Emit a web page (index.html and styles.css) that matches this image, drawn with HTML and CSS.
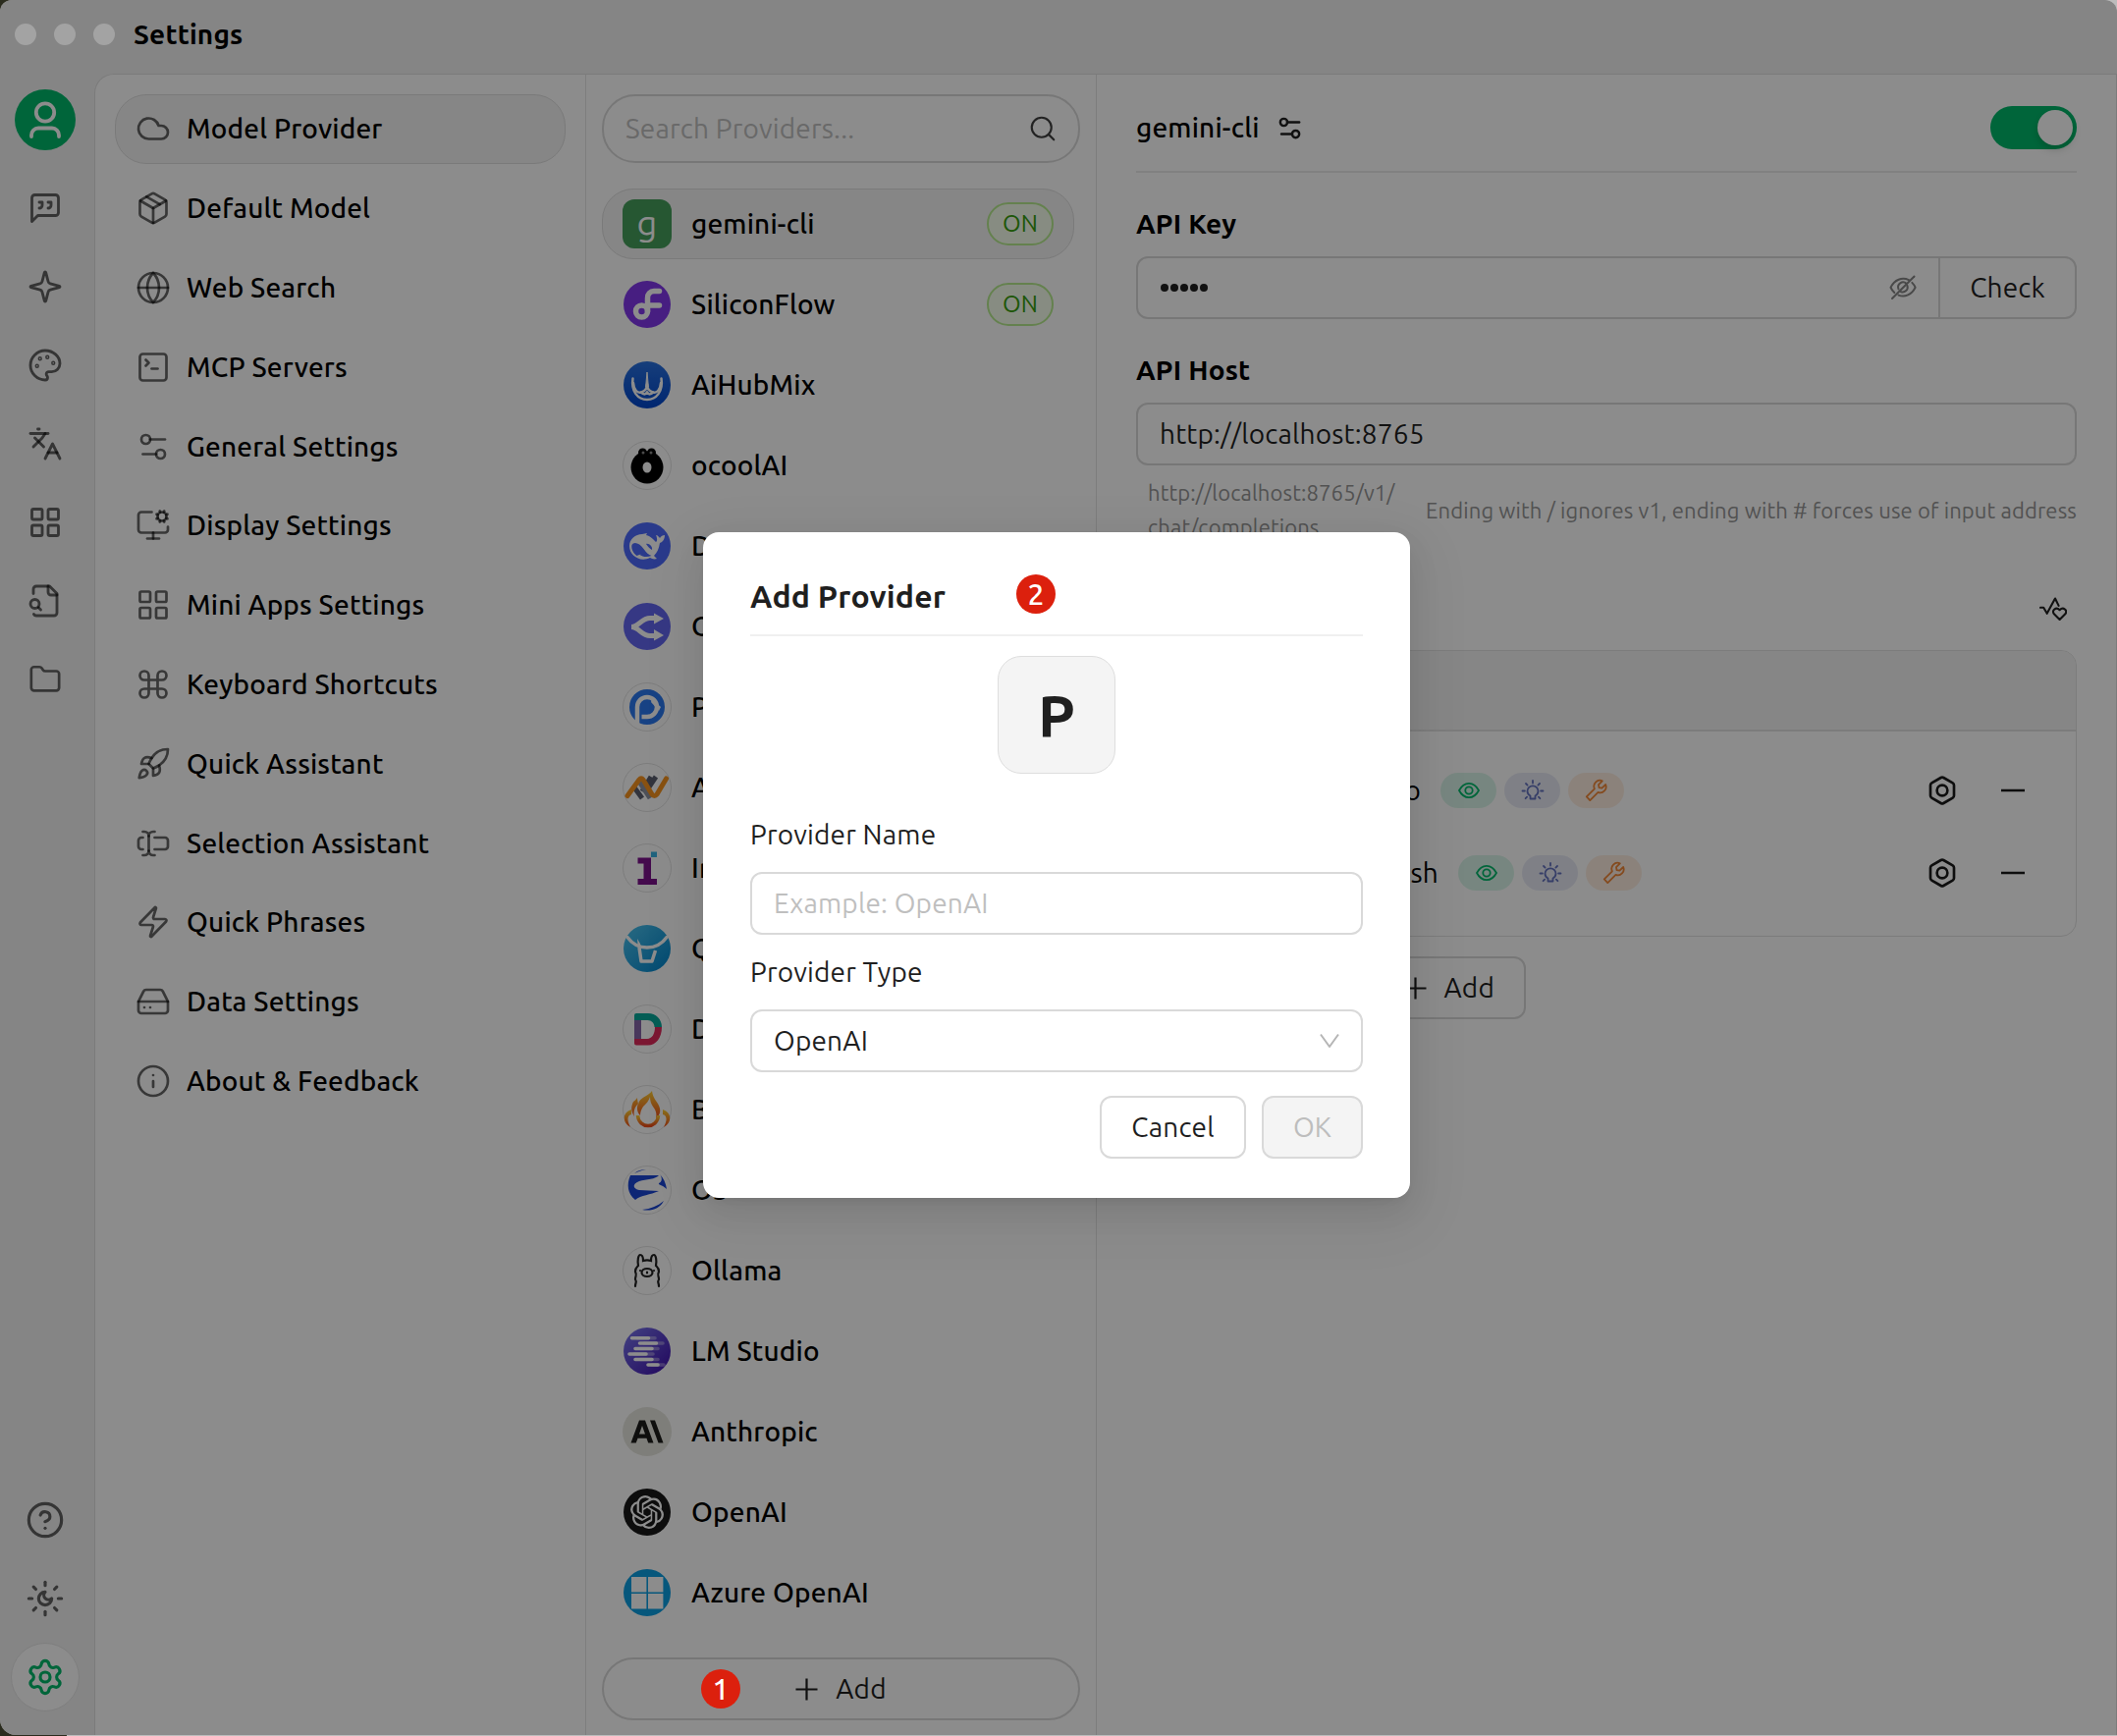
FILE: index.html
```
<!DOCTYPE html>
<html lang="en">
<head>
<meta charset="utf-8">
<title>Settings</title>
<link rel="stylesheet" href="styles.css">
</head>
<body>
<svg class="sprite" aria-hidden="true">
  <symbol id="i-cloud" viewBox="0 0 24 24"><path d="M17.5 19H9a7 7 0 1 1 6.71-9h1.79a4.5 4.5 0 1 1 0 9Z"/></symbol>
  <symbol id="i-package" viewBox="0 0 24 24"><path d="M11 21.73a2 2 0 0 0 2 0l7-4A2 2 0 0 0 21 16V8a2 2 0 0 0-1-1.73l-7-4a2 2 0 0 0-2 0l-7 4A2 2 0 0 0 3 8v8a2 2 0 0 0 1 1.73z"/><path d="M12 22V12"/><path d="M3.29 7 12 12l8.71-5"/><path d="m7.5 4.27 9 5.15"/></symbol>
  <symbol id="i-globe" viewBox="0 0 24 24"><circle cx="12" cy="12" r="10"/><path d="M12 2a14.5 14.5 0 0 0 0 20 14.5 14.5 0 0 0 0-20"/><path d="M2 12h20"/></symbol>
  <symbol id="i-terminal" viewBox="0 0 24 24"><path d="m7 11 2-2-2-2"/><path d="M11 13h4"/><rect width="18" height="18" x="3" y="3" rx="2"/></symbol>
  <symbol id="i-sliders" viewBox="0 0 24 24"><path d="M20 7h-10"/><path d="M14 17H5"/><circle cx="17" cy="17" r="3"/><circle cx="7" cy="7" r="3"/></symbol>
  <symbol id="i-monitor" viewBox="0 0 24 24"><path d="M12 17v4"/><path d="m14.305 7.53.923-.382"/><path d="m15.228 4.852-.923-.383"/><path d="m16.852 3.228-.383-.924"/><path d="m16.852 8.772-.383.923"/><path d="m19.148 3.228.383-.924"/><path d="m19.53 9.696-.382-.924"/><path d="m20.772 4.852.924-.383"/><path d="m20.772 7.148.924.383"/><path d="M22 13v2a2 2 0 0 1-2 2H4a2 2 0 0 1-2-2V5a2 2 0 0 1 2-2h7"/><path d="M8 21h8"/><circle cx="18" cy="6" r="3"/></symbol>
  <symbol id="i-grid" viewBox="0 0 24 24"><rect width="7" height="7" x="3" y="3" rx="1"/><rect width="7" height="7" x="14" y="3" rx="1"/><rect width="7" height="7" x="14" y="14" rx="1"/><rect width="7" height="7" x="3" y="14" rx="1"/></symbol>
  <symbol id="i-command" viewBox="0 0 24 24"><path d="M15 6v12a3 3 0 1 0 3-3H6a3 3 0 1 0 3 3V6a3 3 0 1 0-3 3h12a3 3 0 1 0-3-3"/></symbol>
  <symbol id="i-rocket" viewBox="0 0 24 24"><path d="M4.5 16.5c-1.5 1.26-2 5-2 5s3.74-.5 5-2c.71-.84.7-2.13-.09-2.91a2.18 2.18 0 0 0-2.91-.09z"/><path d="m12 15-3-3a22 22 0 0 1 2-3.95A12.88 12.88 0 0 1 22 2c0 2.72-.78 7.5-6 11a22.35 22.35 0 0 1-4 2z"/><path d="M9 12H4s.55-3.03 2-4c1.62-1.08 5 0 5 0"/><path d="M12 15v5s3.03-.55 4-2c1.08-1.62 0-5 0-5"/></symbol>
  <symbol id="i-cursor" viewBox="0 0 24 24"><path d="M5 4h1a3 3 0 0 1 3 3 3 3 0 0 1 3-3h1"/><path d="M13 20h-1a3 3 0 0 1-3-3 3 3 0 0 1-3 3H5"/><path d="M5 16H4a2 2 0 0 1-2-2v-4a2 2 0 0 1 2-2h1"/><path d="M13 8h7a2 2 0 0 1 2 2v4a2 2 0 0 1-2 2h-7"/><path d="M9 7v10"/></symbol>
  <symbol id="i-zap" viewBox="0 0 24 24"><path d="M4 14a1 1 0 0 1-.78-1.63l9.9-10.2a.5.5 0 0 1 .86.46l-1.92 6.02A1 1 0 0 0 13 10h7a1 1 0 0 1 .78 1.63l-9.9 10.2a.5.5 0 0 1-.86-.46l1.92-6.02A1 1 0 0 0 11 14z"/></symbol>
  <symbol id="i-drive" viewBox="0 0 24 24"><path d="M22 12H2"/><path d="M5.45 5.11 2 12v6a2 2 0 0 0 2 2h16a2 2 0 0 0 2-2v-6l-3.45-6.89A2 2 0 0 0 16.76 4H7.24a2 2 0 0 0-1.79 1.11z"/><path d="M6 16h.01"/><path d="M10 16h.01"/></symbol>
  <symbol id="i-info" viewBox="0 0 24 24"><circle cx="12" cy="12" r="10"/><path d="M12 16v-4"/><path d="M12 8h.01"/></symbol>
  <symbol id="i-quote" viewBox="0 0 24 24"><path d="M21 15a2 2 0 0 1-2 2H7l-4 4V5a2 2 0 0 1 2-2h14a2 2 0 0 1 2 2z"/><path d="M8 12a2 2 0 0 0 2-2V8H8"/><path d="M14 12a2 2 0 0 0 2-2V8h-2"/></symbol>
  <symbol id="i-sparkle" viewBox="0 0 24 24"><path d="M9.937 15.5A2 2 0 0 0 8.5 14.063l-6.135-1.582a.5.5 0 0 1 0-.962L8.5 9.936A2 2 0 0 0 9.937 8.5l1.582-6.135a.5.5 0 0 1 .963 0L14.063 8.5A2 2 0 0 0 15.5 9.937l6.135 1.581a.5.5 0 0 1 0 .964L15.5 14.063a2 2 0 0 0-1.437 1.437l-1.582 6.135a.5.5 0 0 1-.963 0z"/></symbol>
  <symbol id="i-palette" viewBox="0 0 24 24"><circle cx="13.5" cy="6.5" r=".5"/><circle cx="17.5" cy="10.5" r=".5"/><circle cx="8.5" cy="7.5" r=".5"/><circle cx="6.5" cy="12.5" r=".5"/><path d="M12 2C6.5 2 2 6.5 2 12s4.500 10 10 10c.926 0 1.648-.746 1.648-1.688 0-.437-.18-.835-.437-1.125-.29-.289-.438-.652-.438-1.125a1.640 1.640 0 0 1 1.668-1.668h1.996c3.051 0 5.555-2.503 5.555-5.554C21.965 6.012 17.461 2 12 2z"/></symbol>
  <symbol id="i-lang" viewBox="0 0 24 24"><path d="m5 8 6 6"/><path d="m4 14 6-6 2-3"/><path d="M2 5h12"/><path d="M7 2h1"/><path d="m22 22-5-10-5 10"/><path d="M14 18h6"/></symbol>
  <symbol id="i-file" viewBox="0 0 24 24"><path d="M14 2v4a2 2 0 0 0 2 2h4"/><path d="M4.268 21a2 2 0 0 0 1.727 1H18a2 2 0 0 0 2-2V7l-5-5H6a2 2 0 0 0-2 2v3"/><path d="m9 18-1.500-1.500"/><circle cx="5" cy="14" r="3"/></symbol>
  <symbol id="i-folder" viewBox="0 0 24 24"><path d="M20 20a2 2 0 0 0 2-2V8a2 2 0 0 0-2-2h-7.900a2 2 0 0 1-1.690-.9L9.600 3.900A2 2 0 0 0 7.930 3H4a2 2 0 0 0-2 2v13a2 2 0 0 0 2 2Z"/></symbol>
  <symbol id="i-help" viewBox="0 0 24 24"><circle cx="12" cy="12" r="10"/><path d="M9.090 9a3 3 0 0 1 5.830 1c0 2-3 3-3 3"/><path d="M12 17h.01"/></symbol>
  <symbol id="i-sunmoon" viewBox="0 0 24 24"><path d="M12 8a2.830 2.830 0 0 0 4 4 4 4 0 1 1-4-4"/><path d="M12 2v2"/><path d="M12 20v2"/><path d="m4.900 4.900 1.400 1.400"/><path d="m17.700 17.700 1.400 1.400"/><path d="M2 12h2"/><path d="M20 12h2"/><path d="m6.300 17.700-1.400 1.400"/><path d="m19.100 4.900-1.400 1.400"/></symbol>
  <symbol id="i-gear" viewBox="0 0 24 24"><path d="M9.671 4.136a2.340 2.340 0 0 1 4.659 0 2.340 2.340 0 0 0 3.319 1.915 2.340 2.340 0 0 1 2.330 4.033 2.340 2.340 0 0 0 0 3.831 2.340 2.340 0 0 1-2.330 4.033 2.340 2.340 0 0 0-3.319 1.915 2.340 2.340 0 0 1-4.659 0 2.340 2.340 0 0 0-3.320-1.915 2.340 2.340 0 0 1-2.330-4.033 2.340 2.340 0 0 0 0-3.831A2.340 2.340 0 0 1 6.350 6.051a2.340 2.340 0 0 0 3.319-1.915"/><circle cx="12" cy="12" r="3"/></symbol>
  <symbol id="i-search" viewBox="0 0 24 24"><circle cx="11" cy="11" r="8"/><path d="m21 21-4.300-4.300"/></symbol>
  <symbol id="i-bolt" viewBox="0 0 24 24"><path d="M21 16V8a2 2 0 0 0-1-1.730l-7-4a2 2 0 0 0-2 0l-7 4A2 2 0 0 0 3 8v8a2 2 0 0 0 1 1.730l7 4a2 2 0 0 0 2 0l7-4A2 2 0 0 0 21 16z"/><circle cx="12" cy="12" r="4"/></symbol>
  <symbol id="i-minus" viewBox="0 0 24 24"><path d="M0 12h24"/></symbol>
  <symbol id="i-plus" viewBox="0 0 24 24"><path d="M.5 12h23M12 .5v23"/></symbol>
  <symbol id="i-eye" viewBox="0 0 24 24"><path d="M2 12C7 2.500 17 2.500 22 12C17 21.500 7 21.500 2 12Z"/><circle cx="12" cy="12" r="3.700"/></symbol>
  <symbol id="i-bulb" viewBox="0 0 24 24"><path d="M9.500 17.500v3h5v-3c2-1 3-2.800 3-4.700a5.500 5.500 0 0 0-11 0c0 1.900 1 3.700 3 4.700Z"/><path d="M12 2v2.500M5 5l1.600 1.600M19 5l-1.600 1.600M1.500 12.500h2.400M22.500 12.500h-2.400M4.600 20.200l1.500-1.500M19.400 20.200l-1.500-1.500"/></symbol>
  <symbol id="i-wrench" viewBox="0 0 24 24"><path d="M17.800 2.300a6 6 0 0 0-7.900 8L1.800 18.300l3.500 3.800 8.200-8.200a6 6 0 0 0 7.700-7.900l-3.800 3.700-2.900-.6-.5-2.900z"/></symbol>
  <symbol id="i-eyeoff" viewBox="0 0 28 26"><path d="M20 5.200C13 1.800 5.400 5 1.500 12.700C2.500 14.800 3.800 16.600 5.300 18M9.500 20.600C16 23.200 22.900 20 26.600 12.700C25.700 10.800 24.600 9.200 23.300 7.900"/><path d="M17.500 8.800a5 5 0 0 0-8 5.600M11.800 17.100a5 5 0 0 0 6.600-6.300"/><path d="M25.500 1.500 3 24"/></symbol>
  <symbol id="i-health" viewBox="0 0 28 24"><path d="M1 10.800h3.200l3.500 6L16 1.500l3.600 7.400"/><path d="M20.600 23 14.900 17.300c-3-3.600 2-7.700 5.700-4.100 3.700-3.600 8.700.5 5.700 4.100z"/></symbol>
  <symbol id="i-down" viewBox="0 0 20 16"><path d="M1 1.500 10 14 19 1.500"/></symbol>
  <linearGradient id="g-aihub" x1="0" y1="0" x2="0" y2="1"><stop offset="0" stop-color="#2a72e0"/><stop offset="1" stop-color="#0046cc"/></linearGradient>
  <linearGradient id="g-qiniu" x1="0" y1="0" x2="1" y2="1"><stop offset="0" stop-color="#4cc3ee"/><stop offset="1" stop-color="#0084cc"/></linearGradient>
  <linearGradient id="g-flame" x1="0" y1="0" x2="0" y2="1"><stop offset="0" stop-color="#ffd034"/><stop offset="1" stop-color="#f04f1a"/></linearGradient>
  <linearGradient id="g-lm" x1="0" y1="0" x2="1" y2="1"><stop offset="0" stop-color="#7a7aee"/><stop offset="1" stop-color="#3d0cab"/></linearGradient>
</svg>

<div class="window">
  <header class="titlebar">
    <div class="lights"><i></i><i></i><i></i></div>
    <h1 class="window-title">Settings</h1>
  </header>

  <div class="body">
    <aside class="rail">
      <div class="rail-group">
        <div class="me"><svg viewBox="0 0 62 62"><circle cx="31" cy="23.500" r="9.200"/><path d="M17 48v-1.500a7 7 0 0 1 7-7h14a7 7 0 0 1 7 7V48"/></svg></div>
        <div class="rail-item"><svg class="icon"><use href="#i-quote"/></svg></div>
        <div class="rail-item"><svg class="icon"><use href="#i-sparkle"/></svg></div>
        <div class="rail-item"><svg class="icon"><use href="#i-palette"/></svg></div>
        <div class="rail-item"><svg class="icon"><use href="#i-lang"/></svg></div>
        <div class="rail-item"><svg class="icon"><use href="#i-grid"/></svg></div>
        <div class="rail-item"><svg class="icon"><use href="#i-file"/></svg></div>
        <div class="rail-item"><svg class="icon folder"><use href="#i-folder"/></svg></div>
      </div>
      <div class="rail-group rail-bottom">
        <div class="rail-item"><svg class="icon big"><use href="#i-help"/></svg></div>
        <div class="rail-item"><svg class="icon big"><use href="#i-sunmoon"/></svg></div>
        <div class="rail-item current"><svg class="icon big"><use href="#i-gear"/></svg></div>
      </div>
    </aside>

    <div class="content">
      <nav class="menu">
        <a class="menu-item selected"><svg class="icon"><use href="#i-cloud"/></svg><span>Model Provider</span></a>
        <a class="menu-item"><svg class="icon"><use href="#i-package"/></svg><span>Default Model</span></a>
        <a class="menu-item"><svg class="icon"><use href="#i-globe"/></svg><span>Web Search</span></a>
        <a class="menu-item"><svg class="icon"><use href="#i-terminal"/></svg><span>MCP Servers</span></a>
        <a class="menu-item"><svg class="icon"><use href="#i-sliders"/></svg><span>General Settings</span></a>
        <a class="menu-item"><svg class="icon"><use href="#i-monitor"/></svg><span>Display Settings</span></a>
        <a class="menu-item"><svg class="icon"><use href="#i-grid"/></svg><span>Mini Apps Settings</span></a>
        <a class="menu-item"><svg class="icon"><use href="#i-command"/></svg><span>Keyboard Shortcuts</span></a>
        <a class="menu-item"><svg class="icon"><use href="#i-rocket"/></svg><span>Quick Assistant</span></a>
        <a class="menu-item"><svg class="icon"><use href="#i-cursor"/></svg><span>Selection Assistant</span></a>
        <a class="menu-item"><svg class="icon"><use href="#i-zap"/></svg><span>Quick Phrases</span></a>
        <a class="menu-item"><svg class="icon"><use href="#i-drive"/></svg><span>Data Settings</span></a>
        <a class="menu-item"><svg class="icon"><use href="#i-info"/></svg><span>About &amp; Feedback</span></a>
      </nav>

      <section class="providers">
        <div class="search"><span>Search Providers...</span><svg class="icon"><use href="#i-search"/></svg></div>
        <div class="provider-list">
          <div class="provider selected"><div class="logo letter">g</div><span class="name">gemini-cli</span><span class="tag">ON</span></div>
          <div class="provider">
            <svg class="logo" viewBox="0 0 50 50"><circle cx="25" cy="25" r="24" fill="#8138ec"/><g fill="none" stroke="#fff" stroke-width="5.500" stroke-linecap="round"><circle cx="19.500" cy="32" r="6"/><path d="M25.500 32V18.500a6.500 6.500 0 0 1 6.500-7h5.500M26 26h11.500"/></g></svg>
            <span class="name">SiliconFlow</span><span class="tag">ON</span></div>
          <div class="provider">
            <svg class="logo" viewBox="0 0 50 50"><circle cx="25" cy="25" r="24" fill="url(#g-aihub)"/><g fill="none" stroke="#fff" stroke-width="2.500" stroke-linecap="round"><path d="M10.500 18.500c-2 13 5 21.500 14.500 21.500s16.500-8.500 14.500-21.500"/><path d="M11 23c.500 7 4 10.500 8 9.500 4-1 6-4 6-8.500 0 4.500 2 7.500 6 8.500 4 1 7.500-2.500 8-9.500"/><path d="M19 32.500c2 2 4 3 6 0 2 3 4 2 6 0"/></g><path d="M25 12 23.600 27h2.800Z" fill="#fff" stroke="#fff"/></svg>
            <span class="name">AiHubMix</span></div>
          <div class="provider">
            <svg class="logo" viewBox="0 0 50 50"><circle class="rim" cx="25" cy="25" r="24.500"/><circle cx="25" cy="27" r="16.500"/><circle cx="20.500" cy="12" r="4.500"/><circle cx="29.500" cy="12" r="4.500"/><ellipse cx="25" cy="27" rx="4.500" ry="5.500" fill="#fff"/><circle cx="21" cy="12" r="1.500" fill="#888"/><circle cx="29" cy="12" r="1.500" fill="#888"/></svg>
            <span class="name">ocoolAI</span></div>
          <div class="provider">
            <svg class="logo" viewBox="0 0 50 50"><circle cx="25" cy="25" r="24" fill="#4d6bfe"/><path fill="#fff" d="M7 25c0-7 6-12 13-12l5-1-1 2c5 1 8 5 10 7 2-1 1-5 0-7 2 0 3 2 4 3 1-2 3-3 5-3 0 4-2 7-5 8-1 6-3 10-6 13l3 3c-3 1-5 0-7-1-10 5-21-2-21-12Z"/><path fill="#4d6bfe" d="M9.500 24c2-4 8-2 12 4 3 4 5 6 8 7-5 2-9 1-12-1l2-1-5 2c-3-2-6-7-5-11ZM24 23c3-1 7 3 6 6-2-1-4-3-6-6Z"/></svg>
            <span class="name">DeepSeek</span></div>
          <div class="provider">
            <svg class="logo" viewBox="0 0 50 50"><circle cx="25" cy="25" r="24" fill="#6366f1"/><g fill="none" stroke="#fff" stroke-width="5"><path d="M9 25.500c8 0 10-9 19-9h6M9 25.500c8 0 10 9 19 9h6"/></g><path fill="#fff" d="M32 11.500 42 17l-10 5.500ZM32 28l10 6-10 5.500Z"/></svg>
            <span class="name">OpenRouter</span></div>
          <div class="provider">
            <svg class="logo" viewBox="0 0 50 50"><circle class="rim" cx="25" cy="25" r="24.500"/><circle cx="25" cy="25" r="18" fill="#2a78f0"/><path fill="none" stroke="#fff" stroke-width="4.500" d="M15 42V25a10 10 0 1 1 10 10h-5.500"/><path fill="#fff" d="M30 17l9 8-2 4-8-9Z"/></svg>
            <span class="name">PPIO</span></div>
          <div class="provider">
            <svg class="logo" viewBox="0 0 50 50"><circle class="rim" cx="25" cy="25" r="24.500"/><g fill="none" stroke-width="5"><path stroke="#5b6070" d="m12 25 8 11M29 14l-9 15M34 14l-8 12"/><path stroke="#8d93a0" d="m17 19 11 17"/><path stroke="#f79420" stroke-linecap="round" stroke-linejoin="round" d="M5 33.500 17 17q2-2.500 4 0l9 15q2.500 3 5 0L44.500 16"/></g></svg>
            <span class="name">AlayaNew</span></div>
          <div class="provider">
            <svg class="logo" viewBox="0 0 50 50"><circle class="rim" cx="25" cy="25" r="24.500"/><path fill="#7c138c" d="M15.500 14.500H29V36h6v6H15.500v-6h6V20.500h-6Z"/><path fill="#3bb4e6" d="M29 8.500h6v5.500h-6Z"/></svg>
            <span class="name">Infini</span></div>
          <div class="provider">
            <svg class="logo" viewBox="0 0 50 50"><circle cx="25" cy="25" r="24" fill="url(#g-qiniu)"/><path fill="none" stroke="#fff" stroke-width="3.400" stroke-linecap="round" d="M5 13.500c5 7 12 10.500 20 10.500s15-3.500 20-10.500"/><path fill="#fff" d="M15 15l3 5 1 6h-3Z"/><path fill="none" stroke="#fff" stroke-width="3.500" stroke-linejoin="round" d="m17 24 2 14h11l3.500-11"/></svg>
            <span class="name">Qiniu</span></div>
          <div class="provider">
            <svg class="logo" viewBox="0 0 50 50"><circle class="rim" cx="25" cy="25" r="24.500"/><path fill="#8565a8" d="M12 14h7v22l-7 3Z"/><path fill="#06a99c" d="M12 11a2 2 0 0 1 2-2h12c8 0 14 6 14 14h-7.500c0-4-3-7-7-7H12Z"/><path fill="#e02b5c" d="M40 23c0 11-6 18.500-14 18.500H14a2 2 0 0 1-2-2V35h13c5 0 8-5 8-12Z"/></svg>
            <span class="name">DMX</span></div>
          <div class="provider">
            <svg class="logo" viewBox="0 0 50 50"><circle class="rim" cx="25" cy="25" r="24.500"/><path fill="url(#g-flame)" d="M30 6c1 8 5 10 7 15 3 6 0 11-3 13 1-5 0-8-3-12-2-3-3-6-3-10-1 4-4 7-7 10-2 3-3 6-3 9-3-3-4-8-2-12-4 4-5 8-4 13-4-6-3-11-1-15 2-1 3-3 4-4 0 3 1 5 1 7C17 12 26 12 30 6Z"/><path fill="none" stroke="url(#g-flame)" stroke-width="3.500" d="M15.500 31c1 14 20 14 21 0"/><path fill="url(#g-flame)" d="M9 25c-9 3-10 13-1 18-4-8-3-12 1-13ZM41 25c9 3 10 13 1 18 4-8 3-12-1-13Z"/></svg>
            <span class="name">BurnCloud</span></div>
          <div class="provider">
            <svg class="logo" viewBox="0 0 50 50"><circle class="rim" cx="25" cy="25" r="24.500"/><path fill="#1a45d6" d="M8 10h29c-3 4-13 4-20 6-8 3-6 8 0 9l20 1c-9 4-18 4-24 9-8-6-9-16-5-25ZM38 9c4 4 6 9 7 15-5-5-9-4-8-6 3-1 4-5 1-9ZM20 45c9-1 16-4 22-9-4 8-13 11-22 9ZM12 8c4-3 7-4 12-4-5 1-8 2-12 4Z"/></svg>
            <span class="name">O3</span></div>
          <div class="provider">
            <svg class="logo" viewBox="0 0 50 50"><circle class="rim" cx="25" cy="25" r="24.500"/><g fill="none" stroke="#222" stroke-width="2.200" stroke-linecap="round"><path d="M13 41c0-4 2-4 0-7 0-4 2-4 0-8 0-4 2-5 3-6-1-5 0-11 2-11s3 3 3 6c3-1 5-1 8 0 0-3 1-6 3-6s3 6 2 11c1 1 3 2 3 6-2 4 0 4 0 8-2 3 0 3 0 7"/><ellipse cx="25" cy="27" rx="5.500" ry="4"/><path d="M25 26.500v1M18 25h.010M32 25h.010"/></g></svg>
            <span class="name">Ollama</span></div>
          <div class="provider">
            <svg class="logo" viewBox="0 0 50 50"><circle cx="25" cy="25" r="24" fill="url(#g-lm)"/><g stroke="#fff" stroke-width="3.600" stroke-linecap="round"><path stroke-opacity=".35" d="M15 11.700h18M22 17h19M18 22.500h18M12 28h19M18 33.500h18M30 39h12"/><path d="M9.500 11.700h17M17.500 17h17M13 22.500h17M7 28h17M13 33.500h17M26 39h10"/></g></svg>
            <span class="name">LM Studio</span></div>
          <div class="provider">
            <svg class="logo" viewBox="0 0 50 50"><circle class="cream" cx="25" cy="25" r="25"/><path fill="#1c1c1a" fill-rule="evenodd" d="M17 13.500h6l8.500 23h-5.300l-1.700-4.700h-9l-1.700 4.700H8.500Zm3 5.500-3 8.400h6ZM28 13.500h5l8.500 23h-5Z"/></svg>
            <span class="name">Anthropic</span></div>
          <div class="provider">
            <svg class="logo" viewBox="0 0 50 50"><circle cx="25" cy="25" r="24" fill="#181818"/><path fill="#fff" transform="translate(8 8) scale(1.417)" d="M22.2819 9.8211a5.9847 5.9847 0 0 0-.5157-4.9108 6.0462 6.0462 0 0 0-6.5098-2.9A6.0651 6.0651 0 0 0 4.9807 4.1818a5.9847 5.9847 0 0 0-3.9977 2.9 6.0462 6.0462 0 0 0 .7427 7.0966 5.98 5.98 0 0 0 .511 4.9107 6.051 6.051 0 0 0 6.5146 2.9001A5.9847 5.9847 0 0 0 13.2599 24a6.0557 6.0557 0 0 0 5.7718-4.2058 5.9894 5.9894 0 0 0 3.9977-2.9001 6.0557 6.0557 0 0 0-.7475-7.0729zm-9.022 12.6081a4.4755 4.4755 0 0 1-2.8764-1.0408l.1419-.0804 4.7783-2.7582a.7948.7948 0 0 0 .3927-.6813v-6.7369l2.02 1.1686a.071.071 0 0 1 .038.052v5.5826a4.504 4.504 0 0 1-4.4945 4.4944zm-9.6607-4.1254a4.4708 4.4708 0 0 1-.5346-3.0137l.142.0852 4.783 2.7582a.7712.7712 0 0 0 .7806 0l5.8428-3.3685v2.3324a.0804.0804 0 0 1-.0332.0615L9.74 19.9502a4.4992 4.4992 0 0 1-6.1408-1.6464zM2.3408 7.8956a4.485 4.485 0 0 1 2.3655-1.9728V11.6a.7664.7664 0 0 0 .3879.6765l5.8144 3.3543-2.0201 1.1685a.0757.0757 0 0 1-.071 0l-4.8303-2.7865A4.504 4.504 0 0 1 2.3408 7.872zm16.5963 3.8558L13.1038 8.364 15.1192 7.2a.0757.0757 0 0 1 .071 0l4.8303 2.7913a4.4944 4.4944 0 0 1-.6765 8.1042v-5.6772a.79.79 0 0 0-.407-.667zm2.0107-3.0231l-.142-.0852-4.7735-2.7818a.7759.7759 0 0 0-.7854 0L9.409 9.2297V6.8974a.0662.0662 0 0 1 .0284-.0615l4.8303-2.7866a4.4992 4.4992 0 0 1 6.6802 4.66zM8.3065 12.863l-2.02-1.1638a.0804.0804 0 0 1-.038-.0567V6.0742a4.4992 4.4992 0 0 1 7.3757-3.4537l-.142.0805L8.704 5.459a.7948.7948 0 0 0-.3927.6813zm1.0976-2.3654l2.602-1.4998 2.6069 1.4998v2.9994l-2.5974 1.4997-2.6067-1.4997Z"/></svg>
            <span class="name">OpenAI</span></div>
          <div class="provider">
            <svg class="logo" viewBox="0 0 50 50"><circle cx="25" cy="25" r="24" fill="#0c9fe2"/><path fill="#fff" d="M9 9h15.400v15.400H9ZM26 9h15.400v15.400H26ZM9 26h15.400v15.400H9ZM26 26h15.400v15.400H26Z"/></svg>
            <span class="name">Azure OpenAI</span></div>
        </div>
        <div class="add-provider"><svg class="icon"><use href="#i-plus"/></svg><span>Add</span></div>
      </section>

      <main class="detail">
        <div class="detail-head">
          <span class="detail-name">gemini-cli</span><svg class="icon"><use href="#i-sliders"/></svg>
          <div class="switch"><i></i></div>
        </div>
        <h2 class="label">API Key</h2>
        <div class="key-row">
          <div class="key-field"><span class="dots"><i></i><i></i><i></i><i></i><i></i></span><svg class="icon"><use href="#i-eyeoff"/></svg></div>
          <div class="check">Check</div>
        </div>
        <h2 class="label host-label">API Host</h2>
        <div class="host-field">http://localhost:8765</div>
        <div class="hints"><span class="hint-url">http://localhost:8765/v1/<br>chat/completions</span><span class="hint-note">Ending with / ignores v1, ending with # forces use of input address</span></div>
        <div class="models-head"><svg class="icon"><use href="#i-health"/></svg></div>
        <div class="models">
          <div class="models-group"></div>
          <div class="models-rows">
            <div class="model"><span class="model-name pro">gemini-2.5-pro</span>
              <span class="pill green"><svg class="icon"><use href="#i-eye"/></svg></span><span class="pill violet"><svg class="icon"><use href="#i-bulb"/></svg></span><span class="pill orange"><svg class="icon"><use href="#i-wrench"/></svg></span>
              <div class="model-actions"><svg class="icon bolt"><use href="#i-bolt"/></svg><svg class="icon minus"><use href="#i-minus"/></svg></div></div>
            <div class="model"><span class="model-name flash">gemini-2.5-flash</span>
              <span class="pill green"><svg class="icon"><use href="#i-eye"/></svg></span><span class="pill violet"><svg class="icon"><use href="#i-bulb"/></svg></span><span class="pill orange"><svg class="icon"><use href="#i-wrench"/></svg></span>
              <div class="model-actions"><svg class="icon bolt"><use href="#i-bolt"/></svg><svg class="icon minus"><use href="#i-minus"/></svg></div></div>
          </div>
        </div>
        <div class="add-model"><svg class="icon"><use href="#i-plus"/></svg><span>Add</span></div>
      </main>
    </div>
  </div>

  <div class="mask">
    <div class="modal">
      <h2 class="modal-title">Add Provider</h2>
      <div class="modal-logo">P</div>
      <label class="field-label">Provider Name</label>
      <div class="field placeholder">Example: OpenAI</div>
      <label class="field-label second">Provider Type</label>
      <div class="field"><span>OpenAI</span><svg class="icon"><use href="#i-down"/></svg></div>
      <div class="modal-actions"><div class="btn cancel">Cancel</div><div class="btn ok">OK</div></div>
    </div>
    <div class="step step-1">1</div>
    <div class="step step-2">2</div>
  </div>
</div>
</body>
</html>
```

FILE: styles.css
```
* { box-sizing: border-box; }
body {
  margin: 0;
  width: 2156px;
  height: 1768px;
  overflow: hidden;
  background: linear-gradient(90deg, #2b2c1e 68px, #bcbcbc 68px);
  font-family: Ubuntu, "Noto Sans", "Open Sans", sans-serif;
  font-size: 28px;
  line-height: 36px;
  letter-spacing: .18px;
  color: #000;
}
h1, h2 { margin: 0; font-size: inherit; }
.sprite { position: absolute; width: 0; height: 0; }
.icon {
  display: block;
  flex: none;
  width: 36px;
  height: 36px;
  fill: none;
  stroke: currentColor;
  stroke-width: 1.9;
  stroke-linecap: round;
  stroke-linejoin: round;
  overflow: visible;
}

.window {
  position: relative;
  width: 2156px;
  height: 1767px;
  border-radius: 12px 12px 0 16px;
  overflow: hidden;
  background: #f3f3f3;
  display: flex;
  flex-direction: column;
}
.titlebar { display: flex; align-items: center; height: 75px; padding: 0 0 5px 15px; }
.lights { position: relative; z-index: 1; display: flex; gap: 18px; }
.lights i { width: 22px; height: 22px; border-radius: 50%; background: #a3a3a3; }
.window-title { margin-left: 19px; font-weight: 700; }

.body { flex: 1; display: flex; min-height: 0; }
.rail { width: 96px; padding: 16px 0 24px 4px; display: flex; flex-direction: column; justify-content: space-between; color: rgba(0,0,0,.6); }
.rail-group { width: 84px; display: flex; flex-direction: column; align-items: center; gap: 10px; }
.me { width: 62px; height: 62px; margin-bottom: 14px; border-radius: 50%; background: #00b96b; }
.me svg { display: block; fill: none; stroke: #fff; stroke-width: 3.8; stroke-linecap: round; }
.rail-item { width: 70px; height: 70px; display: flex; align-items: center; justify-content: center; }
.rail-item .folder { width: 34px; height: 34px; }
.rail-item .big { width: 40px; height: 40px; }
.rail-item.current { border: 1px solid #e6e6e6; border-radius: 50%; background: #fff; color: #00b96b; }

.content { flex: 1; display: flex; border: 1px solid #e0e0e0; border-width: 1px 1px 0 1px; border-radius: 20px 0 0 0; background: #fff; }
.menu { width: 500px; padding: 20px; border-right: 1px solid #e4e4e4; display: flex; flex-direction: column; gap: 10px; }
.menu-item { height: 70.8px; padding: 0 20px; border: 1px solid transparent; border-radius: 32px; display: flex; align-items: center; gap: 16px; font-weight: 550; color: #000; }
.menu-item .icon { color: rgba(0,0,0,.6); stroke-width: 1.8; }
.menu-item.selected { background: #f4f4f4; border-color: #dedede; }

.providers { width: 520px; padding: 20px 16px 0; border-right: 1px solid #e4e4e4; display: flex; flex-direction: column; }
.search { height: 70px; padding: 0 21px 0 22px; border: 2px solid #d9d9d9; border-radius: 34px; display: flex; align-items: center; justify-content: space-between; color: #bfbfbf; }
.search .icon { width: 30px; height: 30px; color: #404040; stroke-width: 1.7; }
.provider-list { margin-top: 26px; width: 481px; display: flex; flex-direction: column; gap: 10px; }
.provider { height: 72px; padding: 0 20px; border: 1px solid transparent; border-radius: 32px; display: flex; align-items: center; }
.provider.selected { background: #f4f4f4; border-color: #dedede; }
.logo { width: 50px; height: 50px; flex: none; }
.logo .rim { fill: #fff; stroke: #e2e2e2; stroke-width: 1; }
.logo .cream { fill: #e6e6de; }
.logo.letter { border-radius: 12px; background: #469f5c; color: #fff; font-size: 36px; line-height: 48px; text-align: center; }
.name { margin-left: 20px; flex: 1; font-weight: 550; }
.tag { width: 68px; height: 44px; border: 2px solid #b7eb8f; border-radius: 22px; background: #f6ffed; color: #389e0d; font-size: 24px; line-height: 40px; text-align: center; }
.add-provider { margin-top: 30px; height: 64px; border: 2px solid #d9d9d9; border-radius: 32px; display: flex; align-items: center; justify-content: center; gap: 18px; color: #1f1f1f; }
.add-provider .icon, .add-model .icon { width: 23px; height: 23px; stroke-width: 2.3; stroke-linecap: butt; }

.detail { flex: 1; padding: 0 40px; display: flex; flex-direction: column; }
.detail-head { flex: none; height: 100px; padding-top: 10px; border-bottom: 2px solid #ececec; display: flex; align-items: center; font-weight: 500; }
.detail-head .icon { width: 29px; height: 29px; margin-left: 16px; color: #1f1f1f; stroke-width: 2; }
.switch { margin-left: auto; width: 88px; height: 44px; padding: 4px; border-radius: 22px; background: #00b96b; display: flex; justify-content: flex-end; }
.switch i { width: 36px; height: 36px; border-radius: 50%; background: #fff; box-shadow: 0 4px 8px rgba(0,35,11,.2); }
.label { margin-top: 34px; font-weight: 700; }
.key-row { margin-top: 15px; height: 64px; border: 2px solid #d9d9d9; border-radius: 12px; display: flex; align-items: stretch; color: #1f1f1f; flex: none; }
.key-field { flex: 1; padding: 0 22px 0 23px; display: flex; align-items: center; justify-content: space-between; }
.key-field .icon { width: 28px; height: 26px; color: #858585; stroke-width: 2; }
.dots { display: flex; gap: 2px; }
.dots i { width: 8px; height: 8px; border-radius: 50%; background: #1f1f1f; }
.check { width: 139px; border-left: 2px solid #d9d9d9; text-align: center; line-height: 60px; }
.host-label { margin-top: 34px; }
.host-field { flex: none; margin-top: 15px; height: 64px; padding: 0 22px; border: 2px solid #d9d9d9; border-radius: 12px; line-height: 60px; color: #1f1f1f; }
.hints { margin-top: 10px; padding-left: 12px; height: 70px; display: flex; align-items: center; justify-content: space-between; font-size: 22px; line-height: 35px; letter-spacing: .13px; color: #959595; white-space: nowrap; }
.models-head { margin-top: 54px; height: 24px; padding-right: 10px; display: flex; justify-content: flex-end; color: #1f1f1f; }
.models-head .icon { width: 28px; height: 24px; stroke-width: 2.1; }
.models { margin-top: 30px; height: 292px; border: 1px solid #e2e2e2; border-radius: 16px; overflow: hidden; flex: none; }
.models-group { height: 82px; background: #f4f4f4; border-bottom: 2px solid #e2e2e2; }
.models-rows { padding: 18px 52px 18px 32px; display: flex; flex-direction: column; }
.model { height: 84px; display: flex; align-items: center; }
.model-name { text-align: right; margin-right: 20px; }
.model-name.pro { width: 257px; }
.model-name.flash { width: 275px; }
.pill { width: 57px; height: 36px; margin-right: 8px; border-radius: 18px; display: flex; align-items: center; justify-content: center; }
.pill .icon { width: 24px; height: 24px; stroke-width: 1.8; }
.pill.green { background: rgba(0,185,107,.15); color: #00b96b; }
.pill.violet { background: rgba(99,114,189,.15); color: #6372bd; }
.pill.orange { background: rgba(241,135,55,.15); color: #f18737; }
.model-actions { margin-left: auto; display: flex; align-items: center; gap: 44px; color: #1a1a1a; }
.model-actions .bolt { width: 32px; height: 32px; stroke-width: 2; }
.model-actions .minus { width: 24px; height: 24px; stroke-width: 2.6; stroke-linecap: butt; }
.add-model { margin-top: 20px; margin-left: 240px; width: 157px; height: 64px; padding-right: 30px; border: 2px solid #d9d9d9; border-radius: 12px; display: flex; align-items: center; justify-content: flex-end; gap: 18px; color: #1f1f1f; flex: none; }

.mask { position: absolute; inset: 0; background: rgba(0,0,0,.45); }
.modal {
  position: absolute;
  left: 716px;
  top: 542px;
  width: 720px;
  height: 678px;
  padding: 40px 48px;
  border-radius: 16px;
  background: #fff;
  color: #1f1f1f;
  box-shadow: 0 12px 32px rgba(0,0,0,.08), 0 6px 12px -8px rgba(0,0,0,.12), 0 18px 56px 16px rgba(0,0,0,.05);
}
.modal-title { height: 66px; border-bottom: 2px solid #f0f0f0; font-size: 32px; line-height: 50px; font-weight: 700; }
.modal-logo { margin: 20px auto 0; width: 120px; height: 120px; border: 1px solid #dedede; border-radius: 24px; background: #f4f4f4; font-size: 60px; line-height: 118px; text-align: center; font-weight: 600; }
.field-label { display: block; margin-top: 44px; line-height: 36px; }
.field-label.second { margin-top: 20px; }
.field { margin-top: 20px; height: 64px; padding: 0 22px; border: 2px solid #d9d9d9; border-radius: 12px; display: flex; align-items: center; justify-content: space-between; }
.field.placeholder { color: #bfbfbf; }
.field .icon { width: 20px; height: 16px; color: #b5b5b5; stroke-width: 2; stroke-linecap: butt; }
.modal-actions { margin-top: 24px; display: flex; justify-content: flex-end; gap: 16px; }
.btn { height: 64px; border: 2px solid #d9d9d9; border-radius: 12px; line-height: 60px; text-align: center; }
.cancel { width: 149px; }
.ok { width: 103px; background: #f4f4f4; color: #bdbdbd; }
.step { position: absolute; width: 40px; height: 40px; border-radius: 50%; background: #dc200d; color: #fff; font-size: 30px; line-height: 40px; text-align: center; font-weight: 500; }
.step-1 { left: 714px; top: 1700px; }
.step-2 { left: 1035px; top: 585px; }
```
